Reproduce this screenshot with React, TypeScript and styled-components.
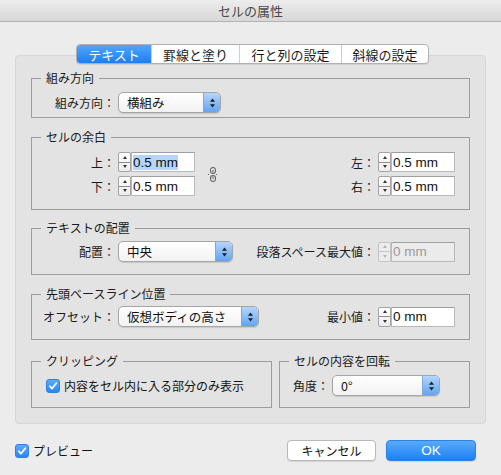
import React from 'react'
import styled, { createGlobalStyle } from 'styled-components'

const GlobalStyle = createGlobalStyle`
  html, body { margin: 0; padding: 0; background: #ececec; }
  body {
    font-family: "Noto Sans CJK JP", "Noto Sans", sans-serif;
    color: #111;
    overflow: hidden;
  }
  * { box-sizing: border-box; }
`

const Window = styled.div`
  width: 501px;
  height: 475px;
  display: flex;
  flex-direction: column;
  background: #ececec;
`

const TitleBar = styled.div`
  height: 22px;
  flex: none;
  display: flex;
  align-items: center;
  justify-content: center;
  background: linear-gradient(#ededed, #d7d7d7);
  border-bottom: 1px solid #b3b3b3;
  font-size: 13px;
  color: #4a4a4a;
`

const TabBar = styled.div`
  position: relative;
  z-index: 1;
  align-self: flex-start;
  display: flex;
  height: 20px;
  margin: 22px 0 0 76px;
  background: #fff;
  border: 1px solid #b0b0b0;
  border-radius: 4px;
  overflow: hidden;
  box-shadow: 0 1px 1px rgba(0, 0, 0, 0.08);
`

const Tab = styled.div<{ $w: number; $active?: boolean }>`
  width: ${p => p.$w}px;
  display: flex;
  align-items: center;
  justify-content: center;
  font-size: 13px;
  color: ${p => (p.$active ? '#fff' : '#1a1a1a')};
  background: ${p => (p.$active ? 'linear-gradient(#52a6fa, #1c7ff5)' : 'transparent')};
  & + & { border-left: 1px solid #cdcdcd; }
`

const Panel = styled.div`
  margin: -9px 15px 0;
  padding: 14px 15px 15px;
  background: #e3e3e3;
  border: 1px solid #d6d6d6;
  border-radius: 4px;
  display: flex;
  flex-direction: column;
`

const Group = styled.fieldset<{ $pt: number; $pb: number; $mt?: number }>`
  margin: ${p => p.$mt ?? 0}px 0 0;
  min-width: 0;
  border: 1px solid #9c9c9c;
  padding: ${p => p.$pt}px 0 ${p => p.$pb}px;
`

const Legend = styled.legend`
  margin-left: 9px;
  padding: 0 5px;
  font-size: 12px;
  line-height: 16px;
  color: #1a1a1a;
`

const Row = styled.div<{ $pl?: number; $pr?: number; $h?: number }>`
  display: flex;
  align-items: center;
  ${p => (p.$h ? `height: ${p.$h}px;` : '')}
  padding: 0 ${p => p.$pr ?? 14}px 0 ${p => p.$pl ?? 0}px;
`

const Col = styled.div<{ $right?: boolean }>`
  display: flex;
  flex-direction: column;
  gap: 4px;
  align-items: ${p => (p.$right ? 'flex-end' : 'flex-start')};
  margin-left: ${p => (p.$right ? 'auto' : '0')};
`

const Label = styled.span<{ $w?: number }>`
  flex: none;
  ${p => (p.$w ? `width: ${p.$w}px; text-align: right;` : '')}
  margin-right: 3px;
  font-size: 12px;
  white-space: nowrap;
  color: #1a1a1a;
`

const Spacer = styled.div`
  flex: 1;
`

const SpinBox = styled.div<{ $disabled?: boolean }>`
  width: 13px;
  height: 20px;
  flex: none;
  display: flex;
  flex-direction: column;
  border: 1px solid ${p => (p.$disabled ? '#c4c4c4' : '#a4a4a4')};
  border-radius: 2px;
  background: ${p => (p.$disabled ? '#ececec' : 'linear-gradient(#fefefe, #ededed)')};
`

const SpinHalf = styled.div<{ $down?: boolean; $disabled?: boolean }>`
  flex: 1;
  display: flex;
  align-items: center;
  justify-content: center;
  border-top: ${p => (p.$down ? `1px solid ${p.$disabled ? '#c8c8c8' : '#8c8c8c'}` : 'none')};
  &::after {
    content: '';
    border-left: 2.5px solid transparent;
    border-right: 2.5px solid transparent;
    ${p =>
      p.$down
        ? `border-top: 3px solid ${p.$disabled ? '#b4b4b4' : '#333'};`
        : `border-bottom: 3px solid ${p.$disabled ? '#b4b4b4' : '#333'};`}
  }
`

const NumField = styled.div<{ $disabled?: boolean; $w?: number }>`
  width: ${p => p.$w ?? 64}px;
  height: 20px;
  flex: none;
  display: flex;
  align-items: center;
  padding-left: 1px;
  border: 1px solid #b9b9b9;
  border-top-color: #9f9f9f;
  background: ${p => (p.$disabled ? '#ebebeb' : '#fff')};
  color: ${p => (p.$disabled ? '#9a9a9a' : '#111')};
  font-family: "Liberation Sans", Arial, sans-serif;
  font-size: 13.5px;
`

const Selected = styled.span`
  background: #b4d6fd;
`

const Popup = styled.div<{ $w: number }>`
  width: ${p => p.$w}px;
  height: 21px;
  flex: none;
  display: flex;
  border: 1px solid #a5a5a5;
  border-radius: 5px;
  background: linear-gradient(#ffffff, #f2f2f2);
  box-shadow: 0 1px 1px rgba(0, 0, 0, 0.12);
  overflow: hidden;
`

const PopupText = styled.span`
  flex: 1;
  display: flex;
  align-items: center;
  padding-left: 8px;
  font-size: 12.5px;
`

const PopupArrows = styled.span`
  width: 17px;
  display: flex;
  align-items: center;
  justify-content: center;
  background: linear-gradient(#b4d6fb, #62a4f3);
  border-left: 1px solid #7ea9dc;
`

const CheckBox = styled.span`
  width: 14px;
  height: 14px;
  flex: none;
  display: flex;
  align-items: center;
  justify-content: center;
  border-radius: 3px;
  background: linear-gradient(#5eaaf9, #2a86f6);
  border: 1px solid #2d7fe0;
`

const CheckText = styled.span`
  margin-left: 4px;
  font-size: 12px;
  white-space: nowrap;
`

const LinkIcon = styled.span`
  align-self: center;
  margin-left: 13px;
  display: flex;
`

const BottomGroups = styled.div`
  display: grid;
  grid-template-columns: 241px 1fr;
  gap: 7px;
  margin-top: 13px;
`

const Footer = styled.div`
  display: flex;
  align-items: center;
  margin-top: 16px;
  padding: 0 25px 0 15px;
`

const Button = styled.div<{ $primary?: boolean }>`
  width: ${p => (p.$primary ? 90 : 89)}px;
  height: 21px;
  margin-left: ${p => (p.$primary ? 10 : 0)}px;
  display: flex;
  align-items: center;
  justify-content: center;
  border-radius: 4px;
  font-size: ${p => (p.$primary ? '13.5px' : '12px')};
  font-family: ${p => (p.$primary ? '"Liberation Sans", Arial, sans-serif' : 'inherit')};
  color: ${p => (p.$primary ? '#fff' : '#111')};
  background: ${p => (p.$primary ? 'linear-gradient(#5aaafa, #1b80f5)' : '#fff')};
  border: 1px solid ${p => (p.$primary ? '#2a82ea' : '#b8b8b8')};
  box-shadow: 0 1px 1px rgba(0, 0, 0, 0.1);
`

const Check = () => (
  <svg width="10" height="10" viewBox="0 0 10 10">
    <path d="M1.8 5.2 L4 7.6 L8.3 2.2" fill="none" stroke="#fff" strokeWidth="1.7" strokeLinecap="round" strokeLinejoin="round" />
  </svg>
)

const UpDown = () => (
  <svg width="7" height="12" viewBox="0 0 7 12">
    <path d="M3.5 1.5 L6 4.8 H1 Z" fill="#1c1c1c" />
    <path d="M3.5 10.5 L6 7.2 H1 Z" fill="#1c1c1c" />
  </svg>
)

// broken chain: the margins are not linked
const Chain = () => (
  <svg width="10" height="15" viewBox="0 0 10 15">
    <g fill="none" stroke="#666" strokeWidth="1.1">
      <rect x="2.5" y="0.5" width="5" height="6" rx="2.5" />
      <rect x="2.5" y="8.5" width="5" height="6" rx="2.5" />
      <path d="M5 3 V5.5 M5 9.5 V12" />
      <path d="M0 7.5 H2 M8 7.5 H10" strokeDasharray="1 1" />
    </g>
  </svg>
)

const Spinner = ({ disabled }: { disabled?: boolean }) => (
  <SpinBox $disabled={disabled}>
    <SpinHalf $disabled={disabled} />
    <SpinHalf $down $disabled={disabled} />
  </SpinBox>
)

interface FieldProps {
  label: string
  value: string
  labelWidth?: number
  disabled?: boolean
  highlight?: boolean
}

const NumberField = ({ label, value, labelWidth, disabled, highlight }: FieldProps) => (
  <Row $pr={0}>
    <Label $w={labelWidth}>{label}</Label>
    <Spinner disabled={disabled} />
    <NumField $disabled={disabled}>{highlight ? <Selected>{value}</Selected> : value}</NumField>
  </Row>
)

const Select = ({ value, width }: { value: string; width: number }) => (
  <Popup $w={width}>
    <PopupText>{value}</PopupText>
    <PopupArrows>
      <UpDown />
    </PopupArrows>
  </Popup>
)

const App: React.FC = () => {
  return (
    <Window>
      <GlobalStyle />
      <TitleBar>セルの属性</TitleBar>

      <TabBar>
        <Tab $w={74} $active>テキスト</Tab>
        <Tab $w={88}>罫線と塗り</Tab>
        <Tab $w={102}>行と列の設定</Tab>
        <Tab $w={87}>斜線の設定</Tab>
      </TabBar>

      <Panel>
        <Group $pt={6} $pb={4}>
          <Legend>組み方向</Legend>
          <Row>
            <Label $w={83}>組み方向：</Label>
            <Select value="横組み" width={103} />
          </Row>
        </Group>

        <Group $pt={7} $pb={13} $mt={11}>
          <Legend>セルの余白</Legend>
          <Row>
            <Col>
              <NumberField label="上：" value="0.5 mm" labelWidth={83} highlight />
              <NumberField label="下：" value="0.5 mm" labelWidth={83} />
            </Col>
            <LinkIcon>
              <Chain />
            </LinkIcon>
            <Col $right>
              <NumberField label="左：" value="0.5 mm" />
              <NumberField label="右：" value="0.5 mm" />
            </Col>
          </Row>
        </Group>

        <Group $pt={5} $pb={12} $mt={10}>
          <Legend>テキストの配置</Legend>
          <Row>
            <Label $w={83}>配置：</Label>
            <Select value="中央" width={115} />
            <Spacer />
            <Label>段落スペース最大値：</Label>
            <Spinner disabled />
            <NumField $disabled>0 mm</NumField>
          </Row>
        </Group>

        <Group $pt={4} $pb={12} $mt={11}>
          <Legend>先頭ベースライン位置</Legend>
          <Row>
            <Label $w={83}>オフセット：</Label>
            <Select value="仮想ボディの高さ" width={141} />
            <Spacer />
            <Label>最小値：</Label>
            <Spinner />
            <NumField>0 mm</NumField>
          </Row>
        </Group>

        <BottomGroups>
          <Group $pt={6} $pb={11}>
            <Legend>クリッピング</Legend>
            <Row $pl={14} $h={21}>
              <CheckBox>
                <Check />
              </CheckBox>
              <CheckText>内容をセル内に入る部分のみ表示</CheckText>
            </Row>
          </Group>
          <Group $pt={6} $pb={11}>
            <Legend>セルの内容を回転</Legend>
            <Row $pl={13}>
              <Label>角度：</Label>
              <Select value="0°" width={108} />
            </Row>
          </Group>
        </BottomGroups>
      </Panel>

      <Footer>
        <CheckBox>
          <Check />
        </CheckBox>
        <CheckText>プレビュー</CheckText>
        <Spacer />
        <Button>キャンセル</Button>
        <Button $primary>OK</Button>
      </Footer>
    </Window>
  )
}

export default App
